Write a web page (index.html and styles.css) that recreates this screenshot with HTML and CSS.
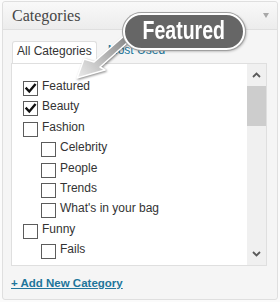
FILE: index.html
```html
<!DOCTYPE html>
<html lang="en">
<head>
  <meta charset="UTF-8" />
  <title>Categories</title>
  <link rel="stylesheet" href="styles.css">
</head>
<body>
  <div class="screen">
    <div class="postbox">
      <div class="postbox-head">
        <h3>Categories</h3>
        <span class="toggle"></span>
      </div>

      <div class="inside">
        <ul class="tabs">
          <li class="tab active">All Categories</li>
          <li class="tab"><a href="#">Most Used</a></li>
        </ul>

        <div class="panel">
          <ul class="checklist">
            <li class="item"><span class="cb"><svg viewBox="0 0 13 13"><path d="M2.5 6.5 L5.3 9.5 L10.8 3" /></svg></span><span class="label">Featured</span></li>
            <li class="item"><span class="cb"><svg viewBox="0 0 13 13"><path d="M2.5 6.5 L5.3 9.5 L10.8 3" /></svg></span><span class="label">Beauty</span></li>
            <li class="item"><span class="cb"></span><span class="label">Fashion</span></li>
            <li class="item child"><span class="cb"></span><span class="label">Celebrity</span></li>
            <li class="item child"><span class="cb"></span><span class="label">People</span></li>
            <li class="item child"><span class="cb"></span><span class="label">Trends</span></li>
            <li class="item child"><span class="cb"></span><span class="label">What's in your bag</span></li>
            <li class="item"><span class="cb"></span><span class="label">Funny</span></li>
            <li class="item child"><span class="cb"></span><span class="label">Fails</span></li>
          </ul>

          <div class="scrollbar">
            <div class="sb-btn"><svg viewBox="0 0 9 6"><polyline points="1,5 4.5,1.5 8,5" /></svg></div>
            <div class="sb-thumb"></div>
            <div class="sb-track"></div>
            <div class="sb-btn"><svg viewBox="0 0 9 6"><polyline points="1,1 4.5,4.5 8,1" /></svg></div>
          </div>
        </div>

        <a class="add-new" href="#">+ Add New Category</a>
      </div>
    </div>

    <svg class="pointer" width="280" height="302" viewBox="0 0 280 302">
      <defs>
        <linearGradient id="arrowFill" x1="77" y1="78" x2="126" y2="39" gradientUnits="userSpaceOnUse">
          <stop offset="0" stop-color="#ececec" />
          <stop offset="1" stop-color="#8c8c8c" />
        </linearGradient>
      </defs>
      <polygon points="77,78 84,59 94,62 124,36 128,42 100,67 105,70" fill="url(#arrowFill)" stroke="#fff" stroke-width="1.5" stroke-linejoin="round" />
    </svg>

    <div class="callout"><span>Featured</span></div>
  </div>
</body>
</html>
```

FILE: styles.css
```css
* {
  box-sizing: border-box;
}

body {
  margin: 0;
  background: #fbfbfb;
  font-family: "Liberation Sans", Arial, sans-serif;
  color: #333;
}

.screen {
  position: relative;
  width: 280px;
  height: 302px;
  overflow: hidden;
}

.postbox {
  margin: 1px 2px 0 2px;
  height: 299px;
  border: 1px solid #dfdfdf;
  border-radius: 3px;
  background: #f5f5f5;
}

.postbox-head {
  display: flex;
  justify-content: space-between;
  align-items: center;
  height: 28px;
  padding: 0 8px 0 9px;
  border-bottom: 1px solid #dfdfdf;
  background: linear-gradient(#f9f9f9, #ececec);
  border-radius: 3px 3px 0 0;
}

h3 {
  margin: 0;
  font-family: "Liberation Serif", "Times New Roman", serif;
  font-weight: normal;
  font-size: 16px;
  line-height: 25px;
  color: #464646;
}

.toggle {
  width: 0;
  height: 0;
  border-left: 3.5px solid transparent;
  border-right: 3.5px solid transparent;
  border-top: 5px solid #a8a8a8;
  margin-bottom: 1px;
}

.inside {
  padding: 0 10px 0 8px;
}

.tabs {
  display: flex;
  margin: 11px 0 0 0;
  padding: 0;
  list-style: none;
  font-size: 12px;
}

.tab {
  line-height: 19px;
  height: 22px;
  padding: 0 4px 2px 11px;
}

.tab.active {
  position: relative;
  margin-left: 1px;
  margin-bottom: -1px;
  padding: 0 4px 2px 4px;
  border: 1px solid #dfdfdf;
  border-bottom: none;
  border-radius: 3px 3px 0 0;
  background: #fff;
}

.tab a {
  color: #21759b;
  text-decoration: none;
}

.panel {
  display: flex;
  height: 203px;
  border: 1px solid #dfdfdf;
  background: #fff;
  overflow: hidden;
}

.checklist {
  flex: 1;
  margin: 0;
  padding: 15px 0 0 11px;
  list-style: none;
}

.item {
  display: flex;
  align-items: flex-start;
  height: 20.4px;
  font-size: 12px;
}

.item.child {
  padding-left: 18px;
}

.cb {
  flex: none;
  width: 15px;
  height: 15px;
  margin-top: 2px;
  margin-right: 4px;
  border: 1px solid #5c5c5c;
  background: #fff;
}

.cb svg {
  display: block;
  width: 13px;
  height: 13px;
}

.cb path {
  fill: none;
  stroke: #111;
  stroke-width: 2.4;
  stroke-linecap: square;
}

.label {
  line-height: 14px;
  color: #333;
  white-space: nowrap;
}

.scrollbar {
  display: flex;
  flex-direction: column;
  width: 19px;
  background: #f0f0f0;
}

.sb-btn {
  display: flex;
  justify-content: center;
  align-items: center;
  height: 22px;
}

.sb-btn svg {
  width: 9px;
  height: 6px;
}

.sb-btn polyline {
  fill: none;
  stroke: #5a5a5a;
  stroke-width: 1.8;
}

.sb-thumb {
  height: 40px;
  background: #cdcdcd;
}

.sb-track {
  flex: 1;
}

.add-new {
  display: inline-block;
  margin-top: 11px;
  font-size: 11.5px;
  font-weight: bold;
  line-height: 13px;
  color: #21759b;
}

.pointer {
  position: absolute;
  left: 0;
  top: 0;
  filter: drop-shadow(1px 1px 1px rgba(0, 0, 0, 0.45));
}

.callout {
  position: absolute;
  left: 123px;
  top: 13px;
  width: 122px;
  height: 37px;
  padding-bottom: 3px;
  border: 2px solid #fff;
  border-radius: 19px;
  background: #666;
  box-shadow: 0 0 0 1px #a0a0a0, 1px 1px 3px rgba(0, 0, 0, 0.4);
  text-align: center;
  line-height: 30px;
}

.callout span {
  display: inline-block;
  transform: scaleX(0.78);
  font-size: 25px;
  font-weight: bold;
  color: #fff;
}
```
